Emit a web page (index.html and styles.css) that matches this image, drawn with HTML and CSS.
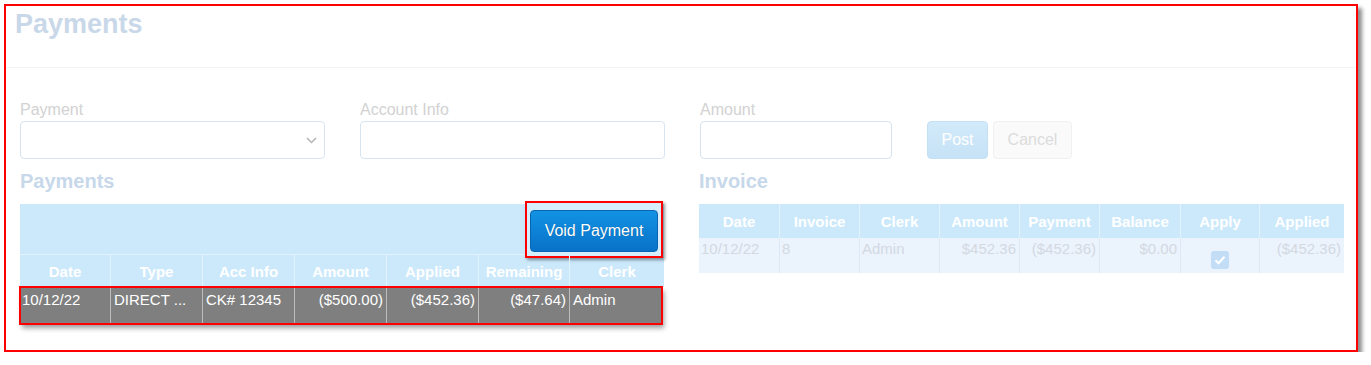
FILE: index.html
```html
<!DOCTYPE html>
<html lang="en">
<head>
    <meta charset="UTF-8" />
    <title>Payments</title>
    <link rel="stylesheet" href="styles.css">
</head>
<body>
    <div class="frame">
        <div class="page-head">
            <h1 class="page-title">Payments</h1>
        </div>

        <div class="entry-row">
            <div class="field">
                <label class="field-label">Payment</label>
                <div class="input select">
                    <svg class="chevron" width="11" height="7" viewBox="0 0 11 7"><path d="M1 1l4.5 4.5L10 1" fill="none" stroke="#b3b3b3" stroke-width="1.5"/></svg>
                </div>
            </div>
            <div class="field">
                <label class="field-label">Account Info</label>
                <div class="input"></div>
            </div>
            <div class="field">
                <label class="field-label">Amount</label>
                <div class="input"></div>
            </div>
            <div class="entry-actions">
                <button class="btn btn-post">Post</button>
                <button class="btn btn-cancel">Cancel</button>
            </div>
        </div>

        <div class="lists">
            <div class="list">
                <h2 class="list-title">Payments</h2>
                <div class="toolbar">
                    <div class="mark">
                        <button class="btn-void">Void Payment</button>
                    </div>
                </div>
                <div class="pay-grid pay-head">
                    <div>Date</div>
                    <div>Type</div>
                    <div>Acc Info</div>
                    <div>Amount</div>
                    <div>Applied</div>
                    <div>Remaining</div>
                    <div>Clerk</div>
                </div>
                <div class="pay-grid pay-row">
                    <div>10/12/22</div>
                    <div>DIRECT ...</div>
                    <div>CK# 12345</div>
                    <div class="num">($500.00)</div>
                    <div class="num">($452.36)</div>
                    <div class="num">($47.64)</div>
                    <div>Admin</div>
                </div>
            </div>

            <div class="list">
                <h2 class="list-title">Invoice</h2>
                <div class="inv-grid inv-head">
                    <div>Date</div>
                    <div>Invoice</div>
                    <div>Clerk</div>
                    <div>Amount</div>
                    <div>Payment</div>
                    <div>Balance</div>
                    <div>Apply</div>
                    <div>Applied</div>
                </div>
                <div class="inv-grid inv-row">
                    <div>10/12/22</div>
                    <div>8</div>
                    <div>Admin</div>
                    <div class="num">$452.36</div>
                    <div class="num">($452.36)</div>
                    <div class="num">$0.00</div>
                    <div class="apply">
                        <span class="check">
                            <svg width="12" height="10" viewBox="0 0 12 10"><path d="M1.5 5.2l3 3L10.5 1.8" fill="none" stroke="#fff" stroke-width="2"/></svg>
                        </span>
                    </div>
                    <div class="num">($452.36)</div>
                </div>
            </div>
        </div>
    </div>
</body>
</html>
```

FILE: styles.css
```css
body {
    margin: 0;
    padding: 0;
    background: #ffffff;
    font-family: 'Liberation Sans', Arial, sans-serif;
}

.frame {
    box-sizing: border-box;
    width: 1354px;
    height: 348px;
    margin: 4px 0 0 4px;
    border: 2px solid #ff0000;
    box-shadow: 4px 4px 4px rgba(0, 0, 0, 0.45);
    background: #ffffff;
}

.page-head {
    height: 61px;
    border-bottom: 1px solid #f4f4f4;
}

.page-title {
    margin: 0;
    padding: 2px 0 0 9px;
    font-size: 27px;
    line-height: 32px;
    font-weight: 700;
    color: #c9d8e9;
}

.entry-row {
    display: grid;
    grid-template-columns: 305px 305px 192px auto;
    column-gap: 35px;
    margin-top: 32px;
    padding-left: 14px;
}

.field-label {
    display: block;
    font-size: 16px;
    line-height: 19px;
    color: #d2d2d2;
    margin-bottom: 2px;
}

.input {
    box-sizing: border-box;
    height: 38px;
    border: 1px solid #d8e4f1;
    border-radius: 4px;
    background: #ffffff;
}

.select {
    display: flex;
    align-items: center;
    justify-content: flex-end;
    padding-right: 7px;
}

.entry-actions {
    display: flex;
    gap: 5px;
    padding-top: 21px;
}

.btn {
    box-sizing: border-box;
    height: 38px;
    border-radius: 4px;
    font-family: inherit;
    font-size: 16px;
    padding: 0;
}

.btn-post {
    width: 61px;
    background: linear-gradient(#d2eafa, #c6e2f6);
    border: 1px solid #c4e0f5;
    color: #ffffff;
}

.btn-cancel {
    width: 79px;
    background: #fafafa;
    border: 1px solid #f0f0f0;
    color: #dcdcdc;
}

.lists {
    display: grid;
    grid-template-columns: 644px 645px;
    column-gap: 35px;
    padding-left: 14px;
}

.list-title {
    margin: 10px 0 11px;
    font-size: 20px;
    line-height: 24px;
    font-weight: 700;
    color: #c7d8ea;
}

.toolbar {
    height: 50px;
    background: #cce9fc;
    display: flex;
    align-items: center;
    justify-content: flex-end;
    padding-right: 1px;
}

.mark {
    box-sizing: border-box;
    height: 57px;
    width: 138px;
    border: 2px solid #ff0000;
    padding: 7px 3px 4px;
    box-shadow: 2px 2px 3px rgba(0, 0, 0, 0.4);
    background: #d6edfc;
}

.btn-void {
    box-sizing: border-box;
    width: 128px;
    height: 42px;
    border: 1px solid #0a64b0;
    border-radius: 4px;
    background: linear-gradient(#1292e4, #0872c8);
    color: #ffffff;
    font-family: inherit;
    font-size: 16px;
    text-shadow: 0 0 1px rgba(0, 0, 0, 0.3);
    padding: 0;
}

.pay-grid {
    display: grid;
    grid-template-columns: 90px 92px 92px 92px 92px 91px 95px;
}

.inv-grid {
    display: grid;
    grid-template-columns: 80px 80px 80px 80px 80px 81px 79px 85px;
}

.pay-head,
.inv-head {
    background: #cce9fc;
    color: #ffffff;
    font-size: 15px;
    font-weight: 700;
    text-align: center;
}

.pay-head {
    height: 33px;
    border-top: 1px solid #e2f2fe;
    box-sizing: border-box;
}

.inv-head {
    height: 34px;
}

.pay-head > div,
.inv-head > div {
    display: flex;
    align-items: center;
    justify-content: center;
    border-left: 1px solid #e2f2fe;
}

.pay-head > div:first-child,
.inv-head > div:first-child {
    border-left: none;
}

.pay-row {
    height: 37px;
    background: #7f7f7f;
    color: #ffffff;
    font-size: 15px;
    line-height: 18px;
    outline: 2px solid #ff0000;
    outline-offset: -1px;
    box-shadow: 2px 4px 5px rgba(0, 0, 0, 0.4);
    width: 642px;
}

.pay-row > div {
    padding: 4px 3px 0;
    border-left: 1px solid #bdbdbd;
    white-space: nowrap;
}

.pay-row > div:first-child {
    border-left: none;
    padding-left: 2px;
}

.inv-row {
    height: 35px;
    background: #ebf3fd;
    color: #d3d9e1;
    font-size: 15px;
    line-height: 18px;
}

.inv-row > div {
    padding: 2px 3px 0 2px;
    border-left: 1px solid #dfe9f5;
}

.inv-row > div:first-child {
    border-left: none;
}

.num {
    text-align: right;
}

.inv-row > .apply {
    display: flex;
    justify-content: center;
    align-items: flex-end;
    padding: 0 0 4px;
}

.check {
    width: 18px;
    height: 18px;
    border-radius: 3px;
    background: #c4ddf7;
    display: flex;
    align-items: center;
    justify-content: center;
}
```
